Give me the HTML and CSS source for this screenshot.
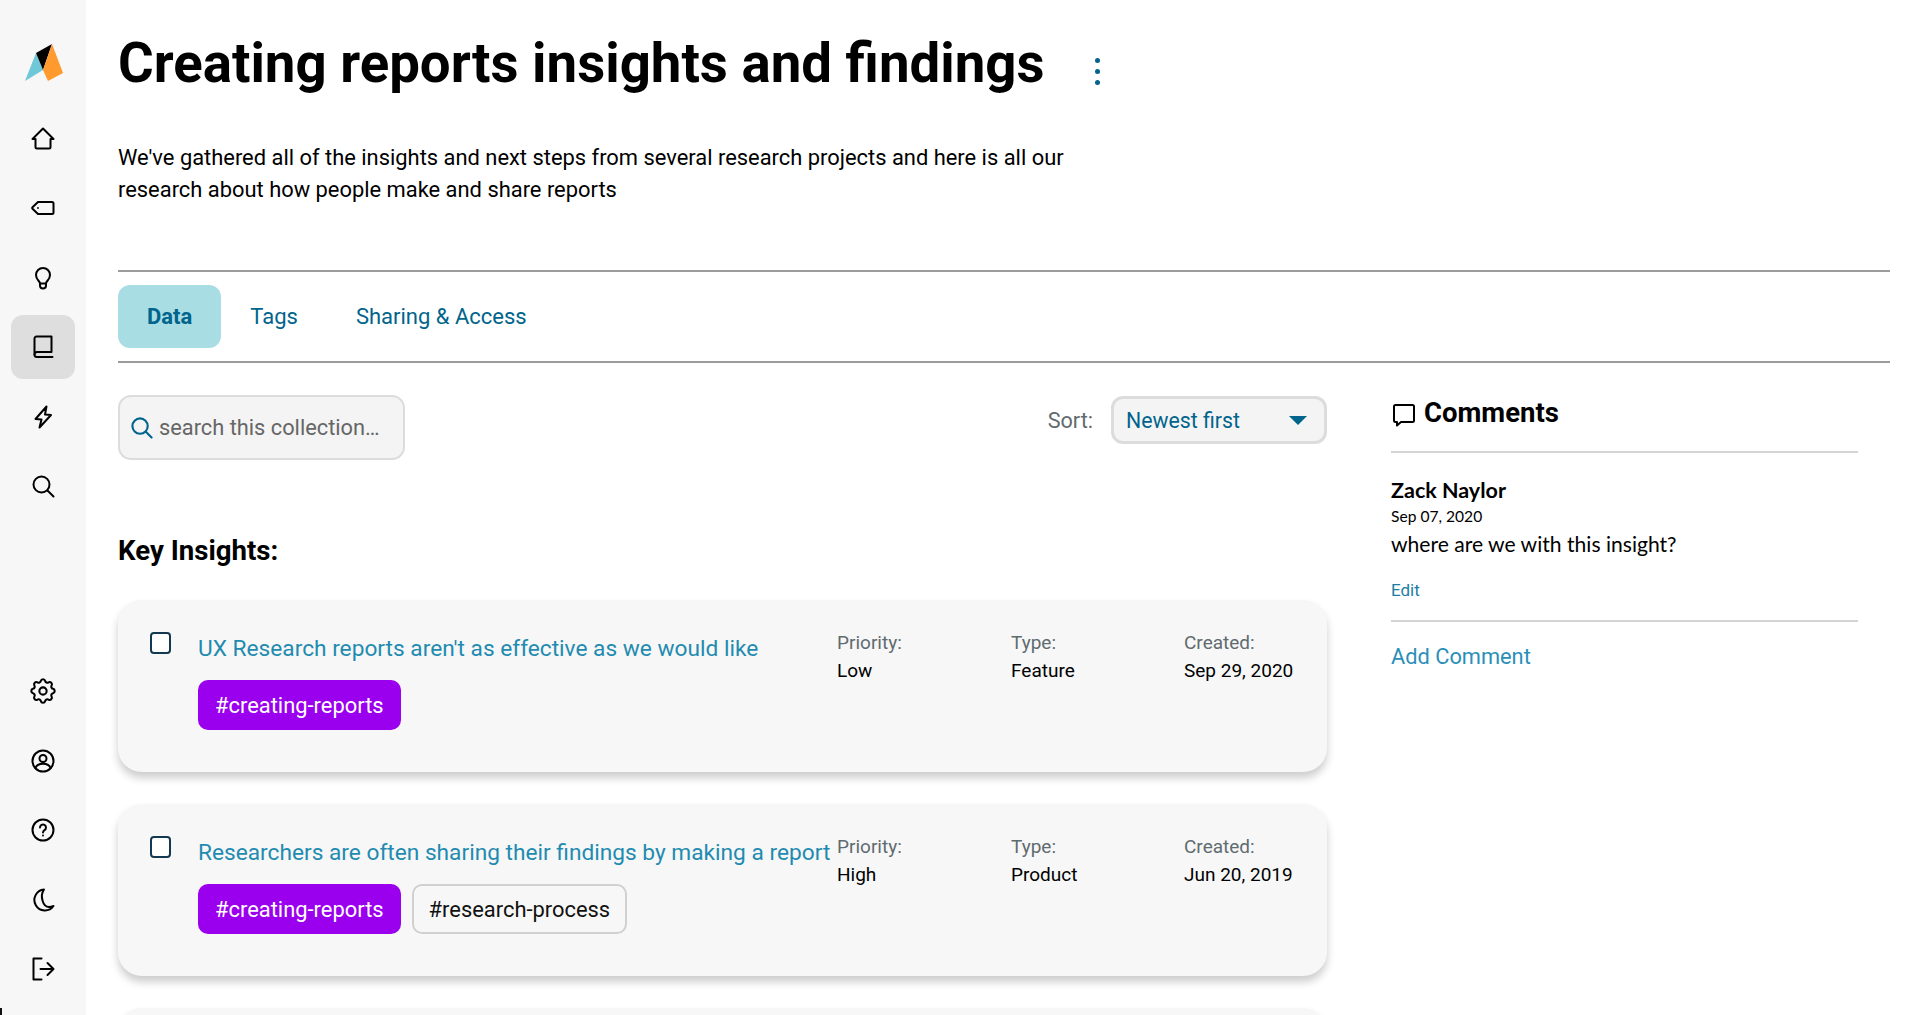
FILE: index.html
```html
<!DOCTYPE html>
<html lang="en">
<head>
<meta charset="utf-8">
<title>Creating reports insights and findings</title>
<link rel="stylesheet" href="styles.css">
</head>
<body>
<div class="app">
  <nav class="sidebar">
    <div class="logo">
      <svg width="44" height="44" viewBox="0 0 44 44"><polygon points="3,39 14,11 21,28" fill="#6fc8d8"/><polygon points="14,11 30,2 21,28" fill="#000"/><polygon points="30,2 41,31 26,39 21,28" fill="#ff9a2e"/></svg>
    </div>
    <div class="nav-group">
      <a class="nav-item"><svg class="ico" viewBox="0 0 24 24"><path d="M4.500 12H1.500L12 1.500 22.500 12h-3M4.500 12v8a1.500 1.500 0 0 0 1.500 1.500h12a1.500 1.500 0 0 0 1.500-1.500v-8"/></svg></a>
      <a class="nav-item"><svg class="ico" viewBox="0 0 24 24"><path d="M7 6h14a1.500 1.500 0 0 1 1.500 1.500v9a1.500 1.500 0 0 1-1.500 1.500H7l-5.500-5.200a1.100 1.100 0 0 1 0-1.600z"/><circle class="solid" cx="7" cy="12" r=".9"/></svg></a>
      <a class="nav-item"><svg class="ico" viewBox="0 0 24 24"><path d="M9 17.500c0-2.500-4-3.500-4-8.500a7 7 0 0 1 14 0c0 5-4 6-4 8.500zM9 17.500V19.500a3 3 0 0 0 6 0v-2"/></svg></a>
      <a class="nav-item active"><svg class="ico" viewBox="0 0 24 24"><path d="M5.500 1.500h15v15.500H6A2.500 2.500 0 0 0 3.500 19.500v-16a2 2 0 0 1 2-2z"/><path d="M3.500 19.500A2.500 2.500 0 0 0 6 22h15.500"/></svg></a>
      <a class="nav-item"><svg class="ico" viewBox="0 0 24 24"><path d="M15.500 1.500l-11 12.500 6 .5L8.500 22.500 20 10l-6-.5z"/></svg></a>
      <a class="nav-item"><svg class="ico" viewBox="0 0 24 24"><circle cx="10.500" cy="10.500" r="8"/><path d="M16.500 16.500l6 6"/></svg></a>
    </div>
    <div class="nav-group nav-bottom">
      <a class="nav-item"><svg class="ico gear" viewBox="2 2 20 20"><circle cx="12" cy="12" r="2.800"/><path d="M10.325 4.317c.426-1.756 2.924-1.756 3.350 0a1.724 1.724 0 0 0 2.573 1.066c1.543-.94 3.310.826 2.370 2.370a1.724 1.724 0 0 0 1.065 2.572c1.756.426 1.756 2.924 0 3.350a1.724 1.724 0 0 0-1.066 2.573c.94 1.543-.826 3.310-2.370 2.370a1.724 1.724 0 0 0-2.572 1.065c-.426 1.756-2.924 1.756-3.350 0a1.724 1.724 0 0 0-2.573-1.066c-1.543.94-3.310-.826-2.370-2.370a1.724 1.724 0 0 0-1.065-2.572c-1.756-.426-1.756-2.924 0-3.350a1.724 1.724 0 0 0 1.066-2.573c-.94-1.543.826-3.310 2.370-2.370 1 .608 2.296.07 2.572-1.065z"/></svg></a>
      <a class="nav-item"><svg class="ico" viewBox="0 0 24 24"><circle cx="12" cy="12" r="10.500"/><circle cx="12" cy="9.500" r="3.500"/><path d="M4.500 19c1-3 3.500-4.200 7.500-4.200s6.500 1.200 7.500 4.200"/></svg></a>
      <a class="nav-item"><svg class="ico" viewBox="0 0 24 24"><circle cx="12" cy="12" r="10.500"/><path d="M9 9.500a3 3 0 1 1 4.500 2.600c-1 .6-1.500 1.200-1.500 2.400"/><circle class="solid" cx="12" cy="17.500" r="1"/></svg></a>
      <a class="nav-item"><svg class="ico" viewBox="0 0 24 24"><path d="M13 1.500A10.500 10.500 0 1 0 22.500 18c-1.500.7-3 1-4.500 1C12 19 8.500 8 13 1.500z"/></svg></a>
      <a class="nav-item"><svg class="ico" viewBox="0 0 24 24"><path d="M10.500 1.500h-8v21h8M9.500 12h13M16.500 6l6 6-6 6"/></svg></a>
    </div>
    <span class="corner"></span>
  </nav>

  <main class="main">
    <header class="head">
      <div class="title-row">
        <h1 class="title">Creating reports insights and findings</h1>
        <span class="dots"><i></i><i></i><i></i></span>
      </div>
      <p class="lede">We've gathered all of the insights and next steps from several research projects and here is all our research about how people make and share reports</p>
    </header>

    <div class="tabs">
      <a class="tab tab-on">Data</a>
      <a class="tab">Tags</a>
      <a class="tab">Sharing &amp; Access</a>
    </div>

    <div class="content">
      <section class="left">
        <div class="tools">
          <div class="search">
            <svg class="search-ico" viewBox="0 0 24 24"><circle cx="10.500" cy="10.500" r="8"/><path d="M16.500 16.500l6 6"/></svg>
            <span>search this collection…</span>
          </div>
          <div class="sort">
            <span class="sort-label">Sort:</span>
            <div class="select"><span>Newest first</span><i class="caret"></i></div>
          </div>
        </div>
        <h2 class="section">Key Insights:</h2>

        <article class="card">
          <span class="check"></span>
          <div class="card-main">
            <a class="card-title">UX Research reports aren't as effective as we would like</a>
            <div class="tags"><span class="tag tag-on">#creating-reports</span></div>
          </div>
          <dl class="meta m-priority"><dt>Priority:</dt><dd>Low</dd></dl>
          <dl class="meta m-type"><dt>Type:</dt><dd>Feature</dd></dl>
          <dl class="meta m-date"><dt>Created:</dt><dd>Sep 29, 2020</dd></dl>
        </article>

        <article class="card">
          <span class="check"></span>
          <div class="card-main">
            <a class="card-title">Researchers are often sharing their findings by making a report</a>
            <div class="tags"><span class="tag tag-on">#creating-reports</span><span class="tag">#research-process</span></div>
          </div>
          <dl class="meta m-priority"><dt>Priority:</dt><dd>High</dd></dl>
          <dl class="meta m-type"><dt>Type:</dt><dd>Product</dd></dl>
          <dl class="meta m-date"><dt>Created:</dt><dd>Jun 20, 2019</dd></dl>
        </article>

        <article class="card"></article>
      </section>

      <aside class="comments">
        <h3 class="comments-head">
          <svg class="ico small" viewBox="0 0 24 24"><path d="M3.500 2h17A1.500 1.500 0 0 1 22 3.500v14a1.500 1.500 0 0 1-1.500 1.500H9l-4 3.500V19H3.500A1.500 1.500 0 0 1 2 17.500v-14A1.500 1.500 0 0 1 3.500 2z"/></svg>
          Comments
        </h3>
        <div class="comment">
          <div class="author">Zack Naylor</div>
          <div class="date">Sep 07, 2020</div>
          <p class="body">where are we with this insight?</p>
          <a class="edit">Edit</a>
        </div>
        <a class="add">Add Comment</a>
      </aside>
    </div>
  </main>
</div>
</body>
</html>
```
FILE: styles.css
```css
* { box-sizing: border-box; }
html, body { margin: 0; height: 1015px; overflow: hidden; background: #fff; }
body { font-family: Roboto, "Liberation Sans", sans-serif; color: #000; }
.app { display: flex; height: 1015px; overflow: hidden; }

.sidebar { position: relative; width: 86px; flex: none; background: #f7f7f7; display: flex; flex-direction: column; align-items: center; }
.corner { position: absolute; left: 0; bottom: 0; width: 2px; height: 7px; background: #111; }
.logo { height: 44px; margin: 42px 0 21px 2px; width: 44px; }
.logo svg { display: block; }
.nav-group { display: flex; flex-direction: column; gap: 5.4px; }
.nav-bottom { margin-top: auto; margin-bottom: 14px; }
.nav-item { width: 64px; height: 64px; border-radius: 12px; padding-right: 1px; display: flex; align-items: center; justify-content: center; }
.nav-item.active { background: #dedede; }
.ico { width: 24px; height: 24px; fill: none; stroke: #000; stroke-width: 2; stroke-linejoin: round; stroke-linecap: round; }
.ico .solid { fill: #000; stroke: none; }
.ico.small { width: 24px; height: 24px; flex: none; }
.ico.gear { width: 26px; height: 26px; stroke-width: 1.600; }

.main { flex: 1; min-width: 0; padding: 0 30px 0 32px; }
.head { height: 270px; }
.title-row { display: flex; align-items: center; padding-top: 29px; }
.title { margin: 0; font-size: 54.600px; line-height: 68px; font-weight: 700; white-space: nowrap; }
.dots { display: flex; flex-direction: column; gap: 6px; margin-left: 50px; margin-top: 16px; }
.dots i { width: 5px; height: 5px; border-radius: 50%; background: #00648c; display: block; }
.lede { margin: 45px 0 0; width: 970px; font-size: 21.900px; line-height: 32px; }

.tabs { display: flex; align-items: center; height: 93px; border-top: 2px solid #9c9c9c; border-bottom: 2px solid #9c9c9c; }
.tab { height: 63px; padding: 0 29px; display: flex; align-items: center; font-size: 22px; color: #00648c; border-radius: 12px; }
.tab-on { background: #a8dde4; font-weight: 700; }

.content { display: flex; }
.left { width: 1209px; flex: none; }
.tools { display: flex; justify-content: space-between; align-items: flex-start; padding-top: 32px; }
.search { width: 287px; height: 65px; background: #f4f4f4; border: 2px solid #dcdcdc; border-radius: 13px; display: flex; align-items: center; padding-left: 10px; gap: 6px; font-size: 21.800px; color: #666; }
.search-ico { width: 23px; height: 23px; fill: none; stroke: #00648c; stroke-width: 2.200; stroke-linecap: round; flex: none; }
.sort { display: flex; align-items: center; gap: 18px; padding-top: 1px; }
.sort-label { font-size: 21.600px; color: #5f6b6f; }
.select { width: 216px; height: 48px; background: #f4f4f4; border: 3px solid #dcdcdc; border-radius: 12px; display: flex; align-items: center; justify-content: space-between; padding: 0 17px 0 12px; font-size: 21.300px; color: #00648c; }
.caret { width: 0; height: 0; border-left: 9.500px solid transparent; border-right: 9.500px solid transparent; border-top: 9px solid #00648c; }
.section { margin: 74px 0 32px; font-size: 27.600px; line-height: 34px; font-weight: 700; }

.card { height: 172px; margin-bottom: 32px; background: #f7f7f7; border-radius: 24px; box-shadow: 0 6px 9px rgba(0,0,0,.2); display: flex; padding: 32px 0 0 32px; }
.check { width: 21px; height: 22px; flex: none; border: 2px solid #12394f; border-radius: 4px; background: #fff; }
.card-main { width: 639px; margin-left: 27px; flex: none; }
.card-title { display: block; font-size: 22.700px; line-height: 30px; color: #1f8bb0; white-space: nowrap; margin-top: 2px; }
.tags { display: flex; gap: 11px; margin-top: 16px; }
.tag { height: 50px; padding: 0 15px; display: flex; align-items: center; font-size: 21.900px; border-radius: 10px; border: 2px solid #d0d0d0; background: #f7f7f7; color: #111; }
.tag-on { background: #9b00ee; border-color: #9b00ee; color: #fff; }
.meta { margin: 0; flex: none; font-size: 19px; line-height: 28px; margin-top: -3px; }
.meta dt { color: #5f6b6f; }
.meta dd { margin: 0; color: #000; }
.m-priority { width: 174px; }
.m-type { width: 173px; }

.comments { margin-left: 64px; width: 467px; flex: none; }
.comments-head { margin: 0; padding-top: 33px; height: 90px; border-bottom: 2px solid #d4d4d4; display: flex; align-items: flex-start; gap: 8px; font-size: 27.500px; line-height: 34px; font-weight: 700; }
.comments-head svg { margin-top: 7px; margin-left: 1px; }
.comment { border-bottom: 2px solid #d4d4d4; height: 169px; padding-top: 23px; font-family: Lato, sans-serif; }
.author { font-size: 21.500px; line-height: 28px; font-weight: 700; }
.date { font-size: 15.600px; line-height: 24px; }
.body { margin: 0; font-size: 21.100px; line-height: 32px; }
.edit { display: block; margin-top: 18px; font-family: Roboto, sans-serif; font-size: 17px; line-height: 24px; color: #1c7ea3; }
.add { display: block; margin-top: 20px; font-size: 21.800px; line-height: 30px; color: #2a8fb8; }
```
